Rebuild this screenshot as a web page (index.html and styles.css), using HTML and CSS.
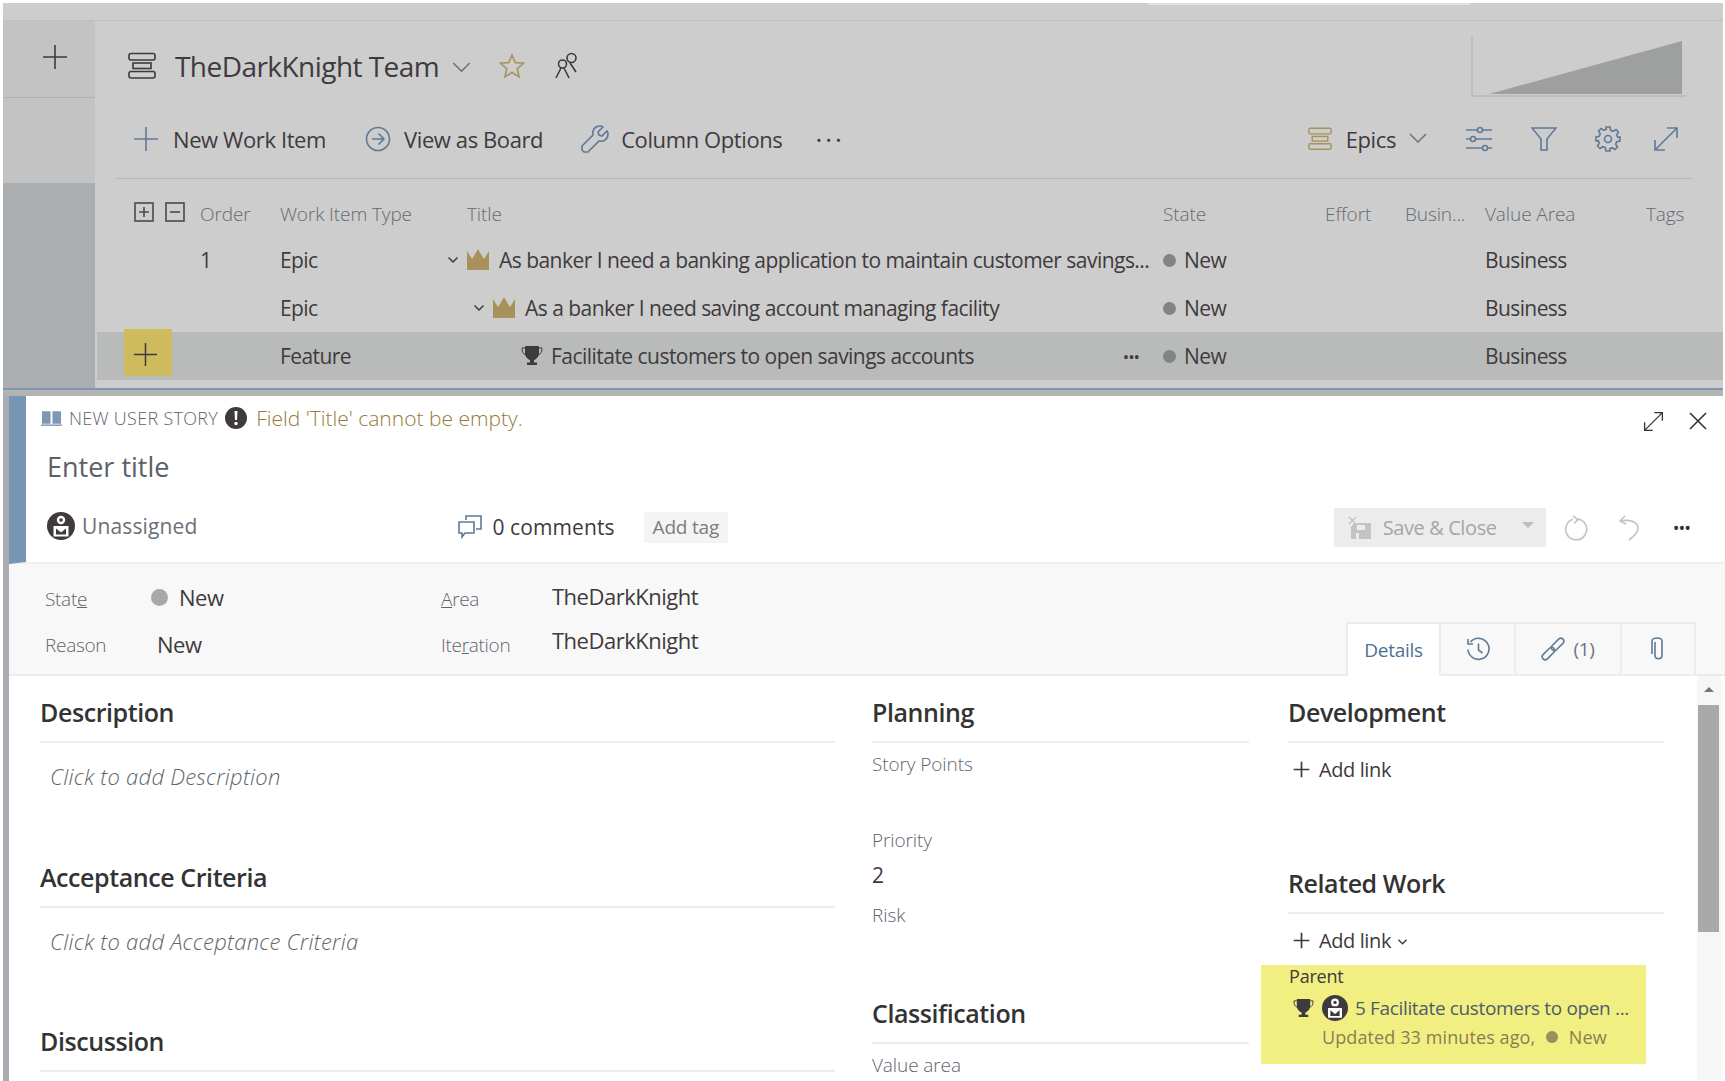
FILE: index.html
```html
<!DOCTYPE html>
<html lang="en">
<head>
    <meta charset="UTF-8">
    <title>TheDarkKnight Team - New User Story</title>
    <link rel="stylesheet" href="styles.css">
</head>
<body>
    <!-- shared icons -->
    <svg class="sprite" aria-hidden="true">
        <symbol id="i-backlog" viewBox="0 0 28 28">
            <rect x="1" y="1.5" width="26" height="6.5" rx="2"/>
            <rect x="5" y="11" width="18" height="5.5"/>
            <rect x="1" y="19.5" width="26" height="6.5" rx="2"/>
        </symbol>
        <symbol id="i-plus" viewBox="0 0 26 26"><path d="M13 1v24M1 13h24"/></symbol>
        <symbol id="i-chevron" viewBox="0 0 20 12"><path d="M1 1l9 9 9-9"/></symbol>
        <symbol id="i-expand" viewBox="0 0 26 26"><path d="M2 24L24 2M14 2h10v10M2 14v10h10"/></symbol>
        <symbol id="i-avatar" viewBox="0 0 28 28">
            <circle cx="14" cy="14" r="14" fill="#3f3a3d" stroke="none"/>
            <circle cx="14" cy="8" r="4.2" fill="#fff" stroke="none"/>
            <circle cx="14" cy="8" r="1.8" fill="#3f3a3d" stroke="none"/>
            <rect x="6.5" y="14" width="15" height="10.5" fill="#fff" stroke="none"/>
            <path d="M9 16.5l5 4 5-4v6H9z" fill="#3f3a3d" stroke="none"/>
        </symbol>
        <symbol id="i-trophy" viewBox="0 0 22 22">
            <path d="M4 1h14v7c0 4-3 6.500-5 7v2.500h3V20H6v-2.500h3V15c-2-.5-5-3-5-7z" fill="#3f3a3d" stroke="none"/>
            <path d="M4 3H1c0 4 1 6 4 7M18 3h3c0 4-1 6-4 7" stroke="#3f3a3d" fill="none"/>
        </symbol>
        <symbol id="i-crown" viewBox="0 0 24 22">
            <path d="M1 2l5 8 2-3 4-7 4 7 2 3 5-8v19H1z" fill="#a8925c" stroke="none"/>
        </symbol>
    </svg>

    <div class="backdrop">
        <div class="top-strip"><span class="top-lip"></span></div>
        <div class="backdrop-body">
            <nav class="rail">
                <div class="rail-add">
                    <svg class="ico rail-plus"><use href="#i-plus"/></svg>
                </div>
                <div class="rail-mid"></div>
                <div class="rail-low"></div>
            </nav>
            <main class="board">
                <header class="board-head">
                    <svg class="ico team-icon"><use href="#i-backlog"/></svg>
                    <h1 class="team-name">TheDarkKnight Team</h1>
                    <svg class="ico team-chevron"><use href="#i-chevron"/></svg>
                    <svg class="ico team-star" viewBox="0 0 26 26"><path d="M13 2l3.200 7.600 8.300.7-6.300 5.400 1.900 8.100-7.100-4.300-7.100 4.300 1.900-8.100L1.500 10.300l8.300-.7z"/></svg>
                    <svg class="ico team-people" viewBox="0 0 24 28"><circle cx="16.500" cy="6" r="4.500"/><circle cx="7.500" cy="12" r="4"/><path d="M1 26l5-10M14 26l-5-10M15 11l6 9"/></svg>
                    <svg class="chart" viewBox="0 0 215 60">
                        <path d="M1 0v59h214" fill="none" stroke="#bdbdbd" stroke-width="2"/>
                        <path d="M18 57L211 4v53z" fill="#9e9f9f"/>
                    </svg>
                </header>

                <div class="toolbar">
                    <svg class="ico tool-icon tool-blue tb-new"><use href="#i-plus"/></svg>
                    <span class="tool-text">New Work Item</span>
                    <svg class="ico tool-icon tool-blue tb-view" viewBox="0 0 26 26"><circle cx="13" cy="13" r="11.500"/><path d="M7 13h12M13.500 7.500L19 13l-5.500 5.500"/></svg>
                    <span class="tool-text">View as Board</span>
                    <svg class="ico tool-icon tool-blue tb-col" viewBox="0 0 28 28"><path d="M3 27l-2-2 0-4L12 10c-1-4 1-9 7-9 1 0 2 0 3 1l-5 5 1 3 3 1 5-5c1 1 1 2 1 3 0 6-5 8-9 7L7 27z"/></svg>
                    <span class="tool-text">Column Options</span>
                    <span class="tool-dots">&middot;&middot;&middot;</span>
                    <svg class="ico tool-icon tool-gold tb-epics"><use href="#i-backlog"/></svg>
                    <span class="tool-text epics-text">Epics</span>
                    <svg class="ico tb-epics-chevron"><use href="#i-chevron"/></svg>
                    <svg class="ico tool-icon tool-blue tb-sliders" viewBox="0 0 28 26"><path d="M1 4h26M1 13h26M1 22h26"/><circle cx="15" cy="4" r="2.500" fill="#cdcdcd"/><circle cx="8" cy="13" r="2.500" fill="#cdcdcd"/><circle cx="20" cy="22" r="2.500" fill="#cdcdcd"/></svg>
                    <svg class="ico tool-icon tool-blue tb-filter" viewBox="0 0 26 26"><path d="M1 2h24l-9 11v11h-6V13z"/></svg>
                    <svg class="ico tool-icon tool-blue tb-gear" viewBox="0 0 26 26"><circle cx="13" cy="13" r="3.500"/><path d="M11 1h4l.7 3.300 2.400 1 2.900-1.800 2.500 2.500-1.800 2.900 1 2.400L25 11v4l-3.300.7-1 2.400 1.800 2.900-2.500 2.500-2.900-1.800-2.400 1L15 25h-4l-.7-3.300-2.400-1-2.900 1.800-2.500-2.500 1.800-2.900-1-2.400L1 15v-4l3.300-.7 1-2.400L3.500 5 6 2.500l2.900 1.800 2.400-1z"/></svg>
                    <svg class="ico tool-icon tool-blue tb-expand"><use href="#i-expand"/></svg>
                </div>

                <div class="grid grid-head">
                    <div class="expand-btns">
                        <svg class="ico box-btn" viewBox="0 0 20 20"><rect x="1" y="1" width="18" height="18"/><path d="M10 5v10M5 10h10"/></svg>
                        <svg class="ico box-btn" viewBox="0 0 20 20"><rect x="1" y="1" width="18" height="18"/><path d="M5 10h10"/></svg>
                    </div>
                    <div>Order</div>
                    <div>Work Item Type</div>
                    <div class="head-title">Title</div>
                    <div>State</div>
                    <div>Effort</div>
                    <div>Busin...</div>
                    <div>Value Area</div>
                    <div>Tags</div>
                </div>

                <div class="grid grid-row">
                    <div></div>
                    <div>1</div>
                    <div>Epic</div>
                    <div class="title-cell indent-1">
                        <svg class="ico row-chevron"><use href="#i-chevron"/></svg>
                        <svg class="row-crown"><use href="#i-crown"/></svg>
                        <span class="title-text">As banker I need a banking application to maintain customer savings...</span>
                    </div>
                    <div class="state-cell"><i class="state-dot"></i>New</div>
                    <div></div><div></div>
                    <div>Business</div>
                    <div></div>
                </div>
                <div class="grid grid-row">
                    <div></div>
                    <div></div>
                    <div>Epic</div>
                    <div class="title-cell indent-2">
                        <svg class="ico row-chevron"><use href="#i-chevron"/></svg>
                        <svg class="row-crown"><use href="#i-crown"/></svg>
                        <span class="title-text">As a banker I need saving account managing facility</span>
                    </div>
                    <div class="state-cell"><i class="state-dot"></i>New</div>
                    <div></div><div></div>
                    <div>Business</div>
                    <div></div>
                </div>
                <div class="grid grid-row row-selected">
                    <div class="add-cell"><button class="add-btn"><svg class="ico"><use href="#i-plus"/></svg></button></div>
                    <div></div>
                    <div>Feature</div>
                    <div class="title-cell indent-3">
                        <svg class="row-trophy"><use href="#i-trophy"/></svg>
                        <span class="title-text">Facilitate customers to open savings accounts</span>
                        <span class="row-more">&bull;&bull;&bull;</span>
                    </div>
                    <div class="state-cell"><i class="state-dot"></i>New</div>
                    <div></div><div></div>
                    <div>Business</div>
                    <div></div>
                </div>
            </main>
        </div>
        <div class="blue-line"></div>
        <div class="shade"></div>
    </div>

    <section class="dialog">
        <div class="dialog-head">
            <div class="crumb-row">
                <svg class="book-icon" viewBox="0 0 22 18"><path d="M1 2h9v13H1zM12 2h9v13h-9z" fill="#7d97b5"/><path d="M0 16.500h22" stroke="#7d97b5" stroke-width="1.500"/></svg>
                <span class="crumb-type">NEW USER STORY</span>
                <svg class="alert-icon" viewBox="0 0 22 22"><circle cx="11" cy="11" r="11" fill="#3f3a3d"/><path d="M9.500 4h3l-.5 9h-2z" fill="#fff"/><circle cx="11" cy="16.500" r="1.700" fill="#fff"/></svg>
                <span class="crumb-error">Field 'Title' cannot be empty.</span>
                <svg class="ico dlg-expand"><use href="#i-expand"/></svg>
                <svg class="ico dlg-close" viewBox="0 0 20 20"><path d="M2 2l16 16M18 2L2 18"/></svg>
            </div>
            <div class="title-input">Enter title</div>
            <div class="action-row">
                <svg class="ico avatar"><use href="#i-avatar"/></svg>
                <span class="assignee">Unassigned</span>
                <svg class="ico comment-icon" viewBox="0 0 24 24"><path d="M8 5V1h15v13h-5"/><path d="M1 7h15v11H7l-3 4v-4H1z"/></svg>
                <span class="comment-count">0 comments</span>
                <span class="add-tag">Add tag</span>
                <button class="save-btn">
                    <svg class="save-icon" viewBox="0 0 24 24"><path d="M6 7h17v16H3V11z" fill="#c4c4c4"/><path d="M1 1l6 6M8 1L1 8" stroke="#c4c4c4" stroke-width="1.500"/><rect x="9" y="9" width="8" height="5" fill="#ececec"/><rect x="8" y="17" width="3" height="6" fill="#ececec"/></svg>
                    <span>Save &amp; Close</span>
                    <i class="save-caret"></i>
                </button>
                <svg class="ico act-icon act-refresh" viewBox="0 0 24 26"><path d="M14 4a10.500 10.500 0 1 1-5 .3M9 1l5 3.500-4 4"/></svg>
                <svg class="ico act-icon act-undo" viewBox="0 0 22 26"><path d="M7 1L2 6l6 3M2 6c10-2 18 1 18 7 0 5-5 9-9 12"/></svg>
                <span class="act-more">&bull;&bull;&bull;</span>
            </div>
        </div>

        <div class="form-band">
            <div class="form-grid">
                <label class="form-label">Stat<u>e</u></label>
                <div class="form-value state-value"><i class="state-big"></i>New</div>
                <label class="form-label"><u>A</u>rea</label>
                <div class="form-value area-value">TheDarkKnight</div>
                <label class="form-label">Reason</label>
                <div class="form-value reason-value">New</div>
                <label class="form-label">Ite<u>r</u>ation</label>
                <div class="form-value iter-value">TheDarkKnight</div>
            </div>
            <div class="tabs">
                <div class="tab tab-active">Details</div>
                <div class="tab tab-history">
                    <svg class="ico tab-icon" viewBox="0 0 24 24"><path d="M4.500 5A10.500 10.500 0 1 1 2 12.500M2 2v5h5M12.500 6.500V13l4 3"/></svg>
                </div>
                <div class="tab tab-links">
                    <svg class="ico tab-icon" viewBox="0 0 24 24"><g transform="rotate(-45 12 12)"><rect x="-2" y="9" width="15" height="6" rx="3"/><rect x="11" y="9" width="15" height="6" rx="3"/></g></svg>
                    <span>(1)</span>
                </div>
                <div class="tab tab-attach">
                    <svg class="ico tab-icon" viewBox="0 0 16 24"><path d="M5 5v13c0 5 7 5 7 0V4c0-4-10-4-10 0v13"/></svg>
                </div>
            </div>
        </div>

        <div class="form-body">
            <div class="col col-left">
                <div class="section">
                    <h3 class="section-head">Description</h3>
                    <p class="placeholder">Click to add Description</p>
                </div>
                <div class="section">
                    <h3 class="section-head">Acceptance Criteria</h3>
                    <p class="placeholder">Click to add Acceptance Criteria</p>
                </div>
                <div class="section">
                    <h3 class="section-head">Discussion</h3>
                </div>
            </div>
            <div class="col col-mid">
                <h3 class="section-head">Planning</h3>
                <div class="field"><div class="field-label">Story Points</div></div>
                <div class="field"><div class="field-label">Priority</div><div class="field-value">2</div></div>
                <div class="field"><div class="field-label">Risk</div></div>
                <h3 class="section-head classification">Classification</h3>
                <div class="field"><div class="field-label">Value area</div></div>
            </div>
            <div class="col col-right">
                <h3 class="section-head">Development</h3>
                <div class="add-link"><svg class="ico add-plus"><use href="#i-plus"/></svg>Add link</div>
                <h3 class="section-head related">Related Work</h3>
                <div class="add-link"><svg class="ico add-plus"><use href="#i-plus"/></svg>Add link<svg class="ico add-chevron"><use href="#i-chevron"/></svg></div>
                <div class="parent-box">
                    <div class="parent-label">Parent</div>
                    <div class="parent-item">
                        <svg class="parent-trophy"><use href="#i-trophy"/></svg>
                        <svg class="parent-avatar"><use href="#i-avatar"/></svg>
                        <span class="parent-title">5 Facilitate customers to open ...</span>
                    </div>
                    <div class="parent-meta">Updated 33 minutes ago, <i class="parent-dot"></i> New</div>
                </div>
            </div>
            <div class="scrollbar">
                <div class="scroll-up"></div>
                <div class="scroll-thumb"></div>
            </div>
        </div>
    </section>
</body>
</html>
```

FILE: styles.css
```css
* {
    box-sizing: border-box;
}

html, body {
    margin: 0;
    height: 100%;
}

body {
    width: 1725px;
    height: 1081px;
    padding: 3px 0 0 3px;
    overflow: hidden;
    background-color: #fff;
    font-family: "Open Sans", sans-serif;
    color: #3f3a3d;
}

.sprite {
    display: none;
}

.ico {
    fill: none;
    stroke: currentColor;
    stroke-width: 1.6;
    flex: none;
}

/* dimmed board behind the dialog */
.backdrop {
    height: 393px;
    margin-right: 2px;
    background-color: #cdcdcd;
}

.top-strip {
    height: 18px;
    border-bottom: 1px solid #bfbfbf;
}

.top-lip {
    display: block;
    width: 322px;
    height: 2px;
    margin-left: 1145px;
    background-color: #e2e2e2;
}

.backdrop-body {
    display: flex;
    height: 367px;
}

.rail {
    width: 92px;
    display: flex;
    flex-direction: column;
    flex: none;
}

.rail-add {
    height: 77px;
    display: flex;
    justify-content: center;
    padding-top: 23px;
    background-color: #c3c3c3;
    border-bottom: 1px solid #b0b0b0;
}

.rail-plus {
    width: 26px;
    height: 26px;
    margin-left: 12px;
    color: #3f3a3d;
}

.rail-mid {
    height: 85px;
    background-color: #c3c3c3;
}

.rail-low {
    flex: 1;
    background-color: #abaeb0;
}

.board {
    flex: 1;
    min-width: 0;
    padding-left: 2px;
}

.board-head {
    display: flex;
    align-items: center;
    height: 89px;
    padding-left: 31px;
}

.team-icon {
    width: 28px;
    height: 28px;
}

.team-name {
    margin: 0 0 0 19px;
    font-size: 28px;
    font-weight: 400;
    letter-spacing: -0.55px;
}

.team-chevron {
    width: 19px;
    height: 11px;
    margin-left: 13px;
    margin-top: 4px;
    color: #6a6f76;
}

.team-star {
    width: 26px;
    height: 26px;
    margin-left: 28px;
    color: #a8925c;
}

.team-people {
    width: 24px;
    height: 28px;
    margin-left: 30px;
}

.chart {
    width: 215px;
    height: 60px;
    margin-left: auto;
    margin-right: 37px;
    align-self: flex-start;
    margin-top: 16px;
}

.toolbar {
    display: flex;
    align-items: center;
    height: 58px;
    margin-left: 18px;
    margin-right: 30px;
    padding-left: 18px;
    padding-bottom: 1px;
    margin-bottom: 10px;
    position: relative;
}

.toolbar::after {
    content: "";
    position: absolute;
    left: 0;
    right: 0;
    bottom: -11px;
    border-bottom: 1px solid #b7b7b7;
}

.tool-icon {
    width: 26px;
    height: 26px;
}

.tool-blue {
    color: #5f7a96;
}

.tool-gold {
    color: #a8925c;
}

.tool-text {
    font-size: 22px;
    letter-spacing: -0.4px;
    white-space: nowrap;
}

.tb-new + .tool-text {
    margin-left: 14px;
}

.tb-view {
    margin-left: 39px;
}

.tb-view + .tool-text {
    margin-left: 13px;
}

.tb-col {
    margin-left: 38px;
    width: 28px;
    height: 28px;
}

.tb-col + .tool-text {
    margin-left: 12px;
}

.tool-dots {
    margin-left: 33px;
    font-size: 26px;
    font-weight: 400;
    letter-spacing: 3px;
}

.tb-epics {
    margin-left: auto;
    width: 24px;
}

.epics-text {
    margin-left: 14px;
}

.tb-epics-chevron {
    width: 18px;
    height: 11px;
    margin-left: 13px;
    color: #6a6f76;
}

.tb-sliders {
    margin-left: 38px;
    width: 28px;
}

.tb-filter {
    margin-left: 38px;
}

.tb-gear {
    margin-left: 38px;
}

.tb-expand {
    margin-left: 32px;
    margin-right: 14px;
}

/* backlog table */
.grid {
    display: grid;
    grid-template-columns: 103px 80px 160px 723px 162px 80px 80px 161px 1fr;
    align-items: center;
    font-size: 21px;
    letter-spacing: -0.6px;
    white-space: nowrap;
}

.grid-head {
    height: 58px;
    padding-top: 19px;
    align-items: start;
    font-size: 19px;
    line-height: 34px;
    letter-spacing: -0.1px;
    color: #666b70;
    font-weight: 300;
}

.expand-btns {
    display: flex;
    gap: 11px;
    padding-left: 37px;
    padding-top: 5px;
}

.box-btn {
    width: 20px;
    height: 20px;
    color: #4a4a4e;
}

.head-title {
    padding-left: 27px;
}

.grid-row {
    height: 48px;
}

.row-selected {
    background-color: #b9baba;
}

.add-cell {
    align-self: start;
}

.add-btn {
    display: flex;
    align-items: center;
    justify-content: center;
    width: 48px;
    height: 47px;
    margin: -3px 0 0 27px;
    padding: 4px 6px 0 0;
    border: 0;
    background-color: #cdbb5e;
    color: #3f3a3d;
}

.add-btn svg {
    width: 25px;
    height: 25px;
}

.title-cell {
    display: flex;
    align-items: center;
    min-width: 0;
}

.title-text {
    letter-spacing: -0.53px;
}

.indent-1 {
    padding-left: 8px;
}

.indent-2 {
    padding-left: 34px;
}

.indent-3 {
    padding-left: 81px;
}

.row-chevron {
    width: 10px;
    height: 6px;
    margin-right: 8px;
    stroke-width: 3;
}

.row-crown {
    width: 24px;
    height: 22px;
    margin-right: 9px;
    flex: none;
}

.row-trophy {
    width: 22px;
    height: 22px;
    margin-right: 8px;
    flex: none;
}

.row-more {
    margin-left: auto;
    margin-right: 24px;
    font-size: 17px;
    letter-spacing: -1px;
}

.state-cell {
    display: flex;
    align-items: center;
    gap: 8px;
}

.state-dot {
    width: 13px;
    height: 13px;
    border-radius: 50%;
    background-color: #7e8487;
}

.blue-line {
    height: 2px;
    background-color: #7d97b5;
}

.shade {
    height: 6px;
    background-color: #b2b3b3;
}

/* dialog */
.dialog {
    height: 685px;
    border-left: 6px solid #a9adb2;
    background-color: #fff;
}

.dialog-head {
    height: 168px;
    border-left: 17px solid #7895b3;
    border-bottom: 2px solid #efefef;
}

.crumb-row {
    display: flex;
    align-items: center;
    height: 44px;
    padding: 0 17px 0 15px;
}

.book-icon {
    width: 21px;
    height: 18px;
    flex: none;
}

.crumb-type {
    margin-left: 7px;
    font-size: 18px;
    letter-spacing: 0.3px;
    font-weight: 300;
    color: #5e646b;
}

.alert-icon {
    width: 22px;
    height: 22px;
    margin-left: 7px;
    flex: none;
}

.crumb-error {
    margin-left: 9px;
    font-size: 21px;
    letter-spacing: 0;
    font-weight: 300;
    color: #96793a;
}

.dlg-expand {
    width: 21px;
    height: 21px;
    margin-left: auto;
    margin-top: 6px;
    color: #333;
}

.dlg-close {
    width: 20px;
    height: 20px;
    margin-left: 24px;
    margin-top: 6px;
    color: #333;
}

.title-input {
    height: 54px;
    padding-left: 21px;
    font-size: 27px;
    line-height: 54px;
    letter-spacing: 0;
    color: #5b6168;
}

.action-row {
    display: flex;
    align-items: center;
    height: 67px;
    padding: 0 35px 0 21px;
}

.avatar {
    width: 28px;
    height: 28px;
    margin-top: -3px;
}

.assignee {
    margin-left: 7px;
    margin-top: -4px;
    font-size: 21px;
    letter-spacing: 0.13px;
    color: #6a7077;
}

.comment-icon {
    width: 24px;
    height: 24px;
    margin-left: 261px;
    margin-top: -1px;
    color: #5f7a96;
}

.comment-count {
    margin-left: 10px;
    margin-top: -2px;
    font-size: 21px;
    letter-spacing: 0.1px;
}

.add-tag {
    margin-left: 29px;
    padding: 0 9px;
    height: 31px;
    line-height: 30px;
    font-size: 19px;
    color: #787d82;
    letter-spacing: -0.2px;
    background-color: #f4f4f4;
}

.save-btn {
    display: flex;
    align-items: center;
    width: 212px;
    height: 39px;
    margin-left: auto;
    padding: 0 0 0 14px;
    border: 0;
    background-color: #ececec;
    font-family: inherit;
    font-size: 20px;
    letter-spacing: -0.4px;
    color: #a6a6a6;
}

.save-icon {
    width: 24px;
    height: 24px;
    margin-right: 11px;
}

.save-caret {
    width: 0;
    height: 0;
    margin: -6px 0 0 25px;
    border: 6px solid transparent;
    border-top-color: #bdbdbd;
    border-bottom: 0;
}

.act-icon {
    width: 24px;
    height: 26px;
    color: #c2c2c2;
}

.act-refresh {
    margin-left: 18px;
}

.act-undo {
    margin-left: 29px;
}

.act-more {
    margin-left: 32px;
    font-size: 18px;
    letter-spacing: -1px;
    color: #333;
}

/* state / area band */
.form-band {
    display: flex;
    height: 112px;
    background-color: #f8f8f8;
    border-bottom: 2px solid #ececec;
}

.form-grid {
    flex: 1;
    display: grid;
    grid-template-columns: 106px 290px 111px 1fr;
    grid-auto-rows: 46px;
    align-items: center;
    padding: 10px 0 0 36px;
}

.form-label {
    padding-top: 4px;
    font-size: 19px;
    letter-spacing: -0.3px;
    font-weight: 300;
    color: #5f656c;
}

.form-value {
    font-size: 22px;
    letter-spacing: -0.5px;
}

.state-value {
    display: flex;
    align-items: center;
    gap: 11px;
}

.state-big {
    width: 17px;
    height: 17px;
    border-radius: 50%;
    background-color: #a8a8a8;
}

.area-value {
    margin-top: -3px;
}

.iter-value {
    margin-top: -6px;
}

.reason-value {
    padding-left: 6px;
    padding-top: 2px;
}

.tabs {
    display: flex;
    height: 54px;
    margin-top: auto;
    margin-right: 29px;
    margin-bottom: -2px;
    position: relative;
}

.tab {
    display: flex;
    align-items: center;
    justify-content: center;
    gap: 8px;
    height: 52px;
    border: 2px solid #ececec;
    border-bottom: 0;
    border-left: 0;
    font-size: 19px;
    letter-spacing: -0.3px;
    color: #6f757c;
}

.tab-active {
    width: 95px;
    height: 54px;
    border-left: 2px solid #ececec;
    background-color: #fff;
    color: #4d6f93;
}

.tab-history {
    width: 75px;
}

.tab-links {
    width: 106px;
}

.tab-attach {
    width: 74px;
}

.tab-icon {
    width: 24px;
    height: 24px;
    color: #5f7a96;
}

/* details */
.form-body {
    display: flex;
    height: 404px;
    padding: 16px 0 0 31px;
    position: relative;
    overflow: hidden;
}

.col {
    flex: none;
}

.col-left {
    width: 795px;
}

.col-mid {
    width: 377px;
    margin-left: 37px;
}

.col-right {
    width: 376px;
    margin-left: 39px;
}

.section {
    height: 164.5px;
}

.section-head {
    height: 51px;
    margin: 0;
    border-bottom: 2px solid #ececec;
    font-size: 25px;
    line-height: 40px;
    font-weight: 600;
    letter-spacing: -0.42px;
    color: #333;
}

.placeholder {
    margin: 18px 0 0 10px;
    font-size: 22px;
    line-height: 30px;
    font-style: italic;
    font-weight: 300;
    letter-spacing: 0.25px;
    color: #5f656c;
}

.field {
    height: 75.5px;
    padding-top: 6px;
}

.field-label {
    font-size: 19px;
    line-height: 30px;
    font-weight: 300;
    letter-spacing: -0.1px;
    color: #5f656c;
}

.field-value {
    padding-top: 3px;
    font-size: 21px;
    line-height: 34px;
}

.classification {
    margin-top: 23px;
}

.add-link {
    display: flex;
    align-items: center;
    height: 36px;
    margin-top: 8px;
    padding-left: 5px;
    font-size: 20px;
    letter-spacing: -0.4px;
}

.add-plus {
    width: 17px;
    height: 17px;
    margin-right: 9px;
    stroke-width: 2.6;
}

.add-chevron {
    width: 9px;
    height: 6px;
    margin-left: 7px;
    margin-top: 3px;
    stroke-width: 3;
}

.related {
    margin-top: 76px;
}

.parent-box {
    width: 385px;
    height: 99px;
    margin: 7px 0 0 -27px;
    padding: 0 0 0 28px;
    background-color: #f2ef82;
}

.parent-label {
    height: 24px;
    font-size: 18px;
    line-height: 22px;
    letter-spacing: -0.2px;
}

.parent-item {
    display: flex;
    align-items: center;
    height: 38px;
    padding-left: 4px;
}

.parent-trophy {
    width: 21px;
    height: 21px;
    flex: none;
}

.parent-avatar {
    width: 26px;
    height: 26px;
    margin-left: 8px;
    flex: none;
}

.parent-title {
    margin-left: 7px;
    font-size: 19px;
    letter-spacing: -0.35px;
    white-space: nowrap;
    color: #4d5c6b;
}

.parent-meta {
    display: flex;
    align-items: center;
    padding-left: 33px;
    margin-top: -1px;
    font-size: 18px;
    line-height: 22px;
    letter-spacing: 0.1px;
    white-space: pre;
    color: #8a7d52;
}

.parent-dot {
    width: 12px;
    height: 12px;
    margin: 0 6px;
    border-radius: 50%;
    background-color: #9a8e5e;
}

.scrollbar {
    width: 24px;
    margin-left: 33px;
    margin-top: -16px;
    background-color: #f6f6f6;
    flex: none;
}

.scroll-up {
    height: 29px;
    position: relative;
}

.scroll-up::after {
    content: "";
    position: absolute;
    left: 7px;
    top: 11px;
    border: 5px solid transparent;
    border-bottom-color: #6b7680;
    border-top: 0;
}

.scroll-thumb {
    width: 21px;
    height: 227px;
    margin-left: 1px;
    background-color: #a9a9a9;
}
```
